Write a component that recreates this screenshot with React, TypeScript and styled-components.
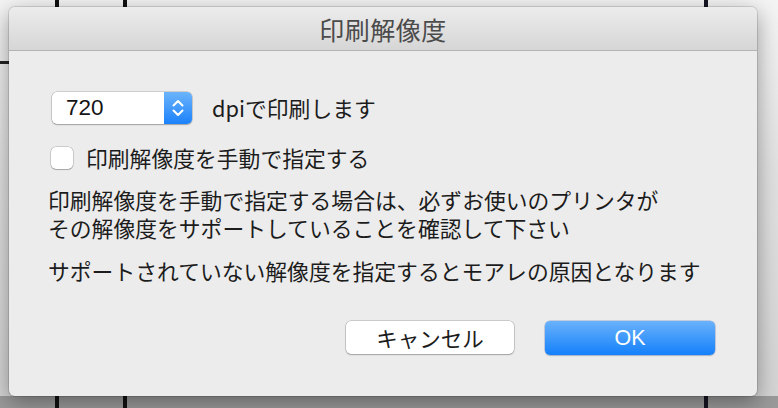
import React, { useState } from 'react';
import styled, { createGlobalStyle, css } from 'styled-components';

const GlobalStyle = createGlobalStyle`
  html, body {
    margin: 0;
    padding: 0;
  }
  body {
    width: 778px;
    height: 408px;
    overflow: hidden;
    font-family: 'Noto Sans CJK JP', 'Liberation Sans', sans-serif;
  }
`;

const App: React.FC = () => {
  const [manual, setManual] = useState(false);

  return (
    <Stage>
      <GlobalStyle />
      <Sheet>
        <TitleBar>印刷解像度</TitleBar>
        <Body>
          <ResolutionRow>
            <PopUp>
              <PopUpValue>720</PopUpValue>
              <Stepper>
                <svg width='14' height='20' viewBox='0 0 14 20' fill='none'>
                  <path d='M2.5 7.5 L7 3 L11.5 7.5' stroke='#fff' strokeWidth='2' strokeLinecap='round' strokeLinejoin='round' />
                  <path d='M2.5 12.5 L7 17 L11.5 12.5' stroke='#fff' strokeWidth='2' strokeLinecap='round' strokeLinejoin='round' />
                </svg>
              </Stepper>
            </PopUp>
            <RowText>dpiで印刷します</RowText>
          </ResolutionRow>

          <CheckRow onClick={() => setManual(!manual)}>
            <CheckBox checked={manual} />
            <RowText>印刷解像度を手動で指定する</RowText>
          </CheckRow>

          <Note>
            印刷解像度を手動で指定する場合は、必ずお使いのプリンタが
            <br />
            その解像度をサポートしていることを確認して下さい
          </Note>
          <Note spaced>サポートされていない解像度を指定するとモアレの原因となります</Note>

          <Buttons>
            <Button>キャンセル</Button>
            <Button primary>OK</Button>
          </Buttons>
        </Body>
      </Sheet>
    </Stage>
  );
};

export default App;

const Stage = styled.div`
  width: 778px;
  height: 408px;
  box-sizing: border-box;
  padding: 7px 21px 0 9px;
  background-color: #ededed;
  background-image:
    linear-gradient(to right, transparent 55px, #111 55px, #111 59px, transparent 59px),
    linear-gradient(to right, transparent 123px, #111 123px, #111 127px, transparent 127px),
    linear-gradient(to right, transparent 704px, #151522 704px, #151522 708px, transparent 708px),
    linear-gradient(to bottom, transparent 61px, #222 61px, #222 64px, transparent 64px),
    linear-gradient(to bottom, #f4f4f4 0, #e2e2e2 40%, #d4d4d4 396px, #9a9a9a 396px, #9a9a9a 100%);
  background-size: 100% 100%, 100% 100%, 100% 100%, 9px 100%, 100% 100%;
  background-repeat: no-repeat;
`;

const Sheet = styled.div`
  width: 748px;
  height: 389px;
  display: flex;
  flex-direction: column;
  background: #ececec;
  border-radius: 6px;
  overflow: hidden;
  box-shadow: 0 0 0 1px rgba(0, 0, 0, 0.12), 0 6px 22px rgba(0, 0, 0, 0.38);
`;

const TitleBar = styled.div`
  height: 43px;
  flex: none;
  display: flex;
  align-items: center;
  justify-content: center;
  background: linear-gradient(to bottom, #ececec, #d6d6d6);
  border-bottom: 1px solid #b4b4b4;
  color: #4b4b4b;
  font-size: 25px;
  letter-spacing: 0.5px;
`;

const Body = styled.div`
  flex: 1;
  display: flex;
  flex-direction: column;
  padding: 40px 42px 0 42px;
  color: #1c1c1c;
  font-size: 21.8px;
`;

const ResolutionRow = styled.div`
  display: flex;
  align-items: center;
  height: 34px;
`;

const PopUp = styled.div`
  width: 140px;
  height: 32px;
  margin-left: 1px;
  display: flex;
  box-sizing: border-box;
  border-radius: 5px;
  background: #fff;
  box-shadow: 0 0 0 0.5px rgba(0, 0, 0, 0.25), 0 1px 1.5px rgba(0, 0, 0, 0.22);
  overflow: hidden;
`;

const PopUpValue = styled.div`
  flex: 1;
  display: flex;
  align-items: center;
  padding-left: 14px;
  font-family: 'Liberation Sans', 'Noto Sans CJK JP', sans-serif;
  font-size: 22.5px;
  color: #151515;
`;

const Stepper = styled.div`
  width: 28px;
  display: flex;
  align-items: center;
  justify-content: center;
  background: linear-gradient(to bottom, #6cb4fb, #1b82fb);
`;

const RowText = styled.span`
  margin-left: 20px;
  line-height: 28px;
`;

const CheckRow = styled.div`
  display: flex;
  align-items: center;
  height: 28px;
  margin-top: 19px;
  cursor: default;

  ${RowText} {
    margin-left: 13px;
  }
`;

const CheckBox = styled.div<{ checked?: boolean }>`
  width: 22px;
  height: 22px;
  box-sizing: border-box;
  border-radius: 5px;
  background: #fff;
  box-shadow: 0 0 0 0.5px rgba(0, 0, 0, 0.28), 0 1px 1px rgba(0, 0, 0, 0.18);

  ${p =>
    p.checked &&
    css`
      background: linear-gradient(to bottom, #6cb4fb, #1b82fb);
    `};
`;

const Note = styled.p<{ spaced?: boolean }>`
  margin: ${p => (p.spaced ? '15px' : '14px')} 0 0 -3px;
  line-height: 28px;
`;

const Buttons = styled.div`
  display: flex;
  justify-content: flex-end;
  gap: 31px;
  margin-top: 36px;
`;

const Button = styled.button<{ primary?: boolean }>`
  width: 168px;
  height: 33px;
  border: none;
  border-radius: 5px;
  font-family: 'Noto Sans CJK JP', 'Liberation Sans', sans-serif;
  font-size: 21.5px;
  line-height: 33px;
  padding: 0;
  background: #fff;
  color: #1c1c1c;
  box-shadow: 0 0 0 0.5px rgba(0, 0, 0, 0.28), 0 1px 1.5px rgba(0, 0, 0, 0.2);

  ${p =>
    p.primary &&
    css`
      width: 170px;
      height: 34px;
      font-family: 'Liberation Sans', 'Noto Sans CJK JP', sans-serif;
      color: #fff;
      background: linear-gradient(to bottom, #6ab2fb, #1480fb);
      box-shadow: 0 0 0 0.5px rgba(0, 60, 160, 0.35), 0 1px 1.5px rgba(0, 0, 0, 0.15);
    `};
`;
